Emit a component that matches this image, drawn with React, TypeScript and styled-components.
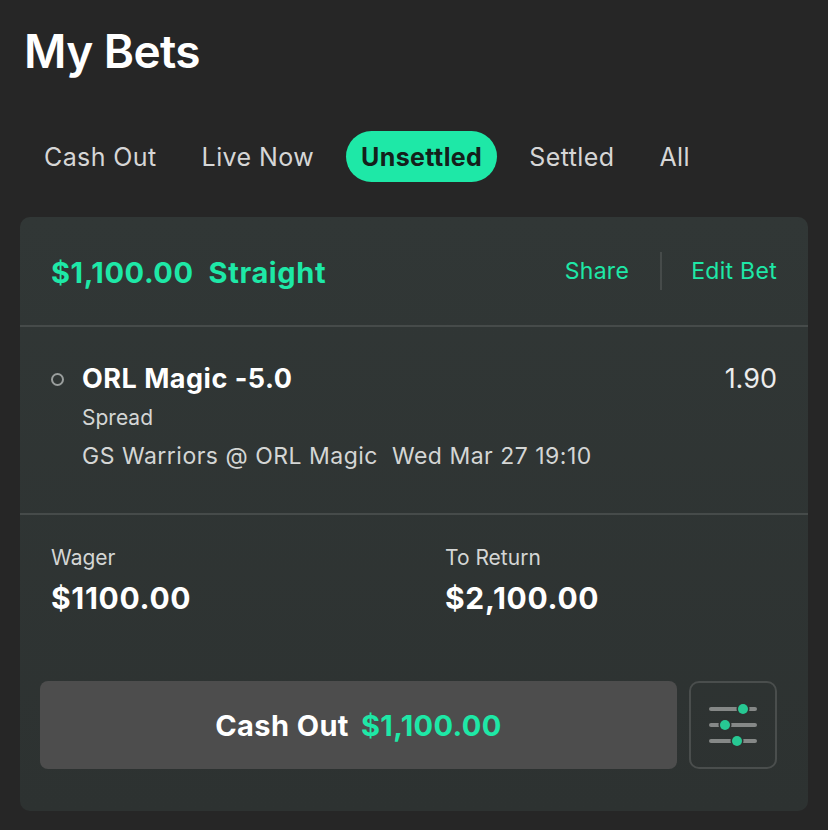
import React from 'react';
import styled, { createGlobalStyle } from 'styled-components';

const GREEN = '#1ee8a7';

const GlobalStyle = createGlobalStyle`
  html, body {
    margin: 0;
    padding: 0;
    background: #262626;
  }
  body {
    font-family: Inter, "Noto Sans", "Liberation Sans", sans-serif;
    color: #ffffff;
  }
`;

const Page = styled.div`
  width: 828px;
  min-height: 830px;
  box-sizing: border-box;
  padding: 22px 20px 18px;
  background: #262626;
`;

const Title = styled.h1`
  margin: 0 0 0 4px;
  font-size: 46px;
  line-height: 58px;
  font-weight: 600;
  letter-spacing: -0.6px;
`;

const Tabs = styled.div`
  display: flex;
  align-items: center;
  gap: 19px;
  margin: 51px 0 35px 11px;
`;

const Tab = styled.div<{ $active?: boolean }>`
  height: 51px;
  display: flex;
  align-items: center;
  padding: 0 ${p => (p.$active ? 15 : 13)}px;
  border-radius: 26px;
  font-size: 25px;
  letter-spacing: 0.4px;
  font-weight: ${p => (p.$active ? 700 : 400)};
  color: ${p => (p.$active ? '#14201b' : '#d6d6d6')};
  background: ${p => (p.$active ? GREEN : 'transparent')};
`;

const Card = styled.div`
  border-radius: 10px;
  background: linear-gradient(180deg, #313736 0%, #2d3231 100%);
  overflow: hidden;
`;

const Header = styled.div`
  height: 108px;
  display: flex;
  align-items: center;
  justify-content: space-between;
  padding: 0 31px;
  border-bottom: 2px solid #464b4a;
`;

const HeaderTitle = styled.div`
  font-size: 29px;
  font-weight: 700;
  color: ${GREEN};
  letter-spacing: 0.6px;
  white-space: pre;
  margin-top: 2px;
`;

const HeaderActions = styled.div`
  display: flex;
  align-items: center;
`;

const Action = styled.div`
  font-size: 23px;
  letter-spacing: 0.3px;
  color: ${GREEN};
  padding: 0 0 0 29px;
  &:first-child {
    padding: 0 31px 0 0;
    border-right: 2px solid #464b4a;
    line-height: 38px;
  }
`;

const Selection = styled.div`
  display: flex;
  justify-content: space-between;
  padding: 36px 31px 38px 30px;
  border-bottom: 2px solid #464b4a;
`;

const SelectionMain = styled.div`
  display: flex;
  align-items: flex-start;
`;

const Ring = styled.span`
  width: 9px;
  height: 9px;
  border: 2px solid #9a9e9d;
  border-radius: 50%;
  margin: 10px 18px 0 1px;
  flex-shrink: 0;
`;

const SelectionText = styled.div`
  display: flex;
  flex-direction: column;
`;

const Pick = styled.div`
  font-size: 27px;
  line-height: 32px;
  font-weight: 700;
  letter-spacing: 0.5px;
  margin-bottom: 4px;
`;

const Detail = styled.div<{ $size?: number; $spacing?: number }>`
  font-size: ${p => p.$size ?? 21}px;
  letter-spacing: ${p => p.$spacing ?? 0}px;
  color: #d4d6d5;
  line-height: 38px;
  white-space: pre;
`;

const Odds = styled.div`
  font-size: 27px;
  line-height: 32px;
  color: #ececec;
`;

const Footer = styled.div`
  padding: 28px 31px 42px 20px;
`;

const Figures = styled.div`
  display: grid;
  grid-template-columns: 394px 1fr;
  padding-left: 11px;
  margin-bottom: 63px;
`;

const Figure = styled.div`
  display: flex;
  flex-direction: column;
`;

const FigureLabel = styled.div`
  font-size: 21px;
  line-height: 30px;
  color: #d4d6d5;
`;

const FigureValue = styled.div`
  font-size: 30px;
  line-height: 40px;
  font-weight: 700;
  letter-spacing: 0.7px;
  margin-top: 5px;
`;

const Actions = styled.div`
  display: flex;
  gap: 12px;
`;

const CashOutButton = styled.div`
  flex: 1;
  height: 88px;
  border-radius: 8px;
  background: #4d4d4d;
  display: flex;
  align-items: center;
  justify-content: center;
  font-size: 29px;
  font-weight: 700;
  letter-spacing: 0.4px;
  gap: 12px;
`;

const Amount = styled.span`
  color: ${GREEN};
`;

const FilterButton = styled.div`
  width: 88px;
  height: 88px;
  box-sizing: border-box;
  border: 2px solid #4a4e4d;
  border-radius: 10px;
  display: flex;
  align-items: center;
  justify-content: center;
`;

function SlidersIcon() {
  const rows = [
    { y: 6, cx: 34 },
    { y: 22, cx: 16 },
    { y: 38, cx: 28 },
  ];
  return (
    <svg width="48" height="44" viewBox="0 0 48 44">
      {rows.map(r => (
        <g key={r.y}>
          <line x1="2" y1={r.y} x2="46" y2={r.y} stroke="#858887" strokeWidth="4" strokeLinecap="round" />
          <circle cx={r.cx} cy={r.y} r="6.5" fill="#2e3231" />
          <circle cx={r.cx} cy={r.y} r="5" fill="#27c893" />
        </g>
      ))}
    </svg>
  );
}

export default function App() {
  const tabs = ['Cash Out', 'Live Now', 'Unsettled', 'Settled', 'All'];
  return (
    <>
      <GlobalStyle />
      <Page>
        <Title>My Bets</Title>
        <Tabs>
          {tabs.map(t => (
            <Tab key={t} $active={t === 'Unsettled'}>
              {t}
            </Tab>
          ))}
        </Tabs>
        <Card>
          <Header>
            <HeaderTitle>{'$1,100.00  Straight'}</HeaderTitle>
            <HeaderActions>
              <Action>Share</Action>
              <Action>Edit Bet</Action>
            </HeaderActions>
          </Header>
          <Selection>
            <SelectionMain>
              <Ring />
              <SelectionText>
                <Pick>ORL Magic -5.0</Pick>
                <Detail>Spread</Detail>
                <Detail $size={23} $spacing={0.5}>
                  {'GS Warriors @ ORL Magic  Wed Mar 27 19:10'}
                </Detail>
              </SelectionText>
            </SelectionMain>
            <Odds>1.90</Odds>
          </Selection>
          <Footer>
            <Figures>
              <Figure>
                <FigureLabel>Wager</FigureLabel>
                <FigureValue>$1100.00</FigureValue>
              </Figure>
              <Figure>
                <FigureLabel>To Return</FigureLabel>
                <FigureValue>$2,100.00</FigureValue>
              </Figure>
            </Figures>
            <Actions>
              <CashOutButton>
                Cash Out <Amount>$1,100.00</Amount>
              </CashOutButton>
              <FilterButton>
                <SlidersIcon />
              </FilterButton>
            </Actions>
          </Footer>
        </Card>
      </Page>
    </>
  );
}
